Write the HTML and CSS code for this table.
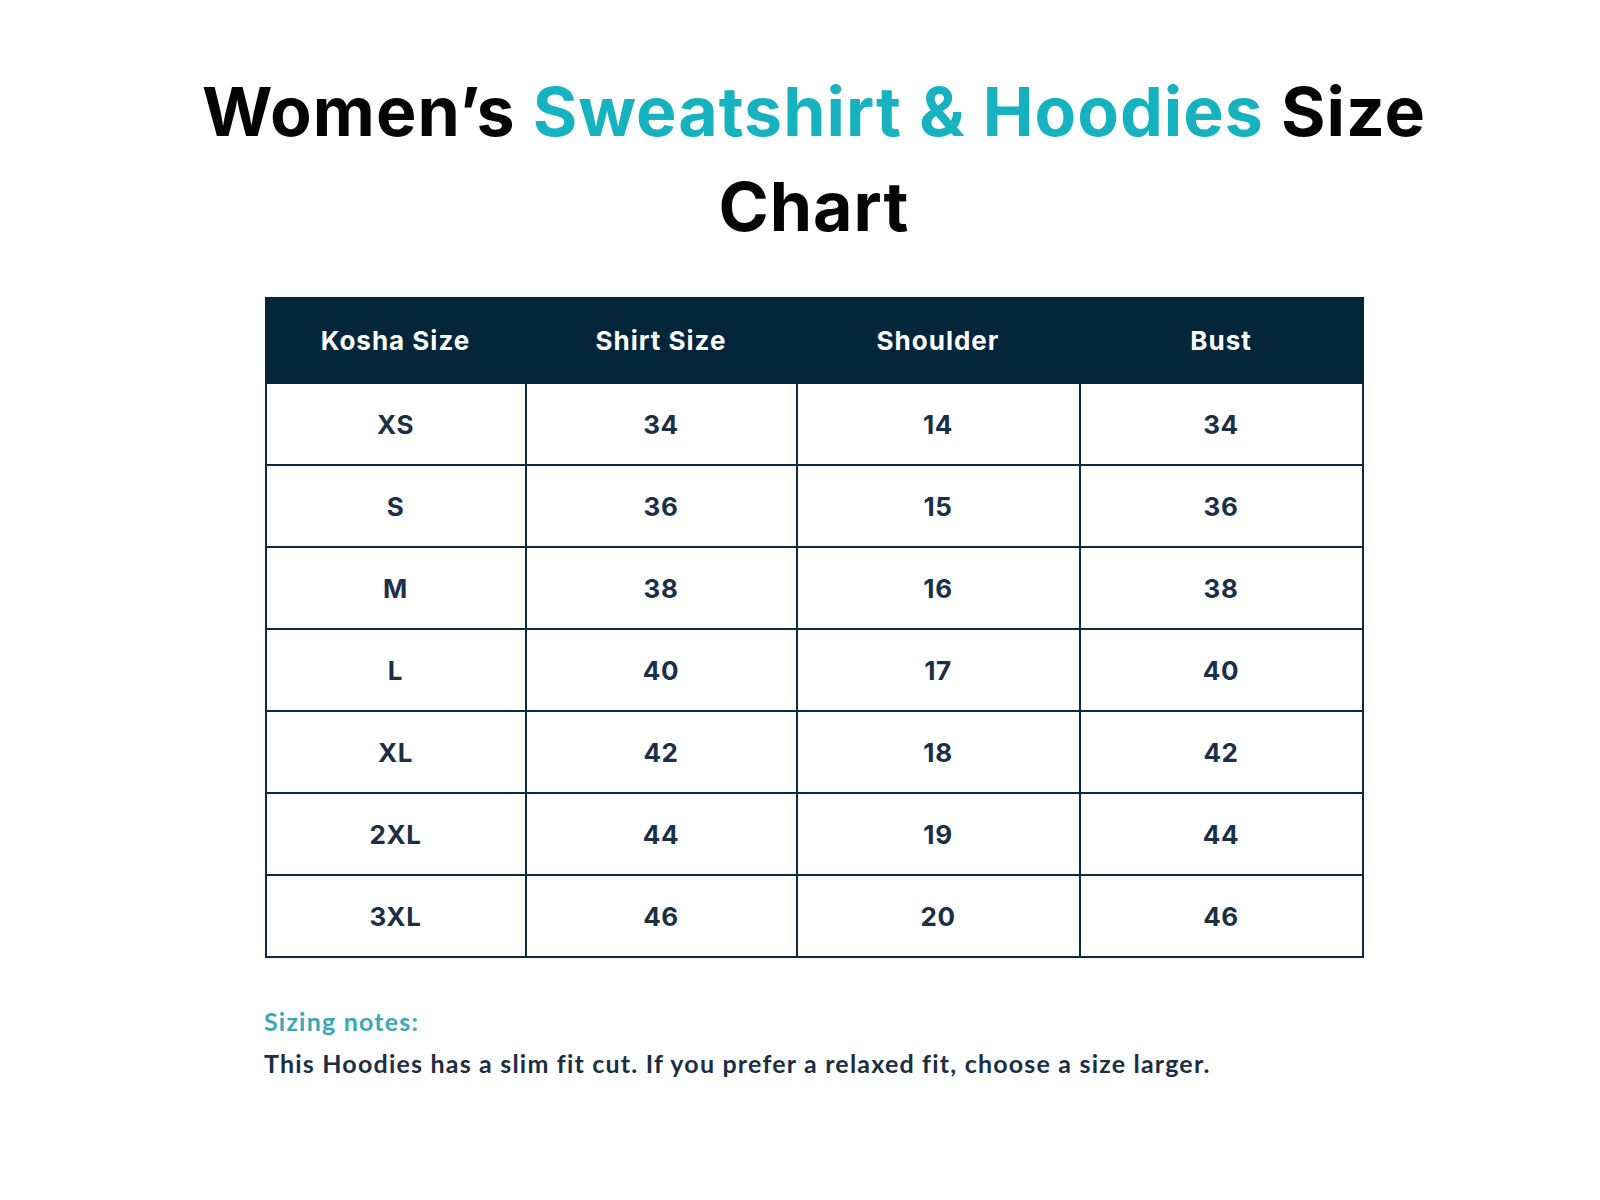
FILE: index.html
```html
<!DOCTYPE html>
<html lang="en">
<head>
<meta charset="utf-8">
<title>Women’s Sweatshirt &amp; Hoodies Size Chart</title>
<link rel="stylesheet" href="styles.css">
</head>
<body>
<main class="page">
  <h1 class="title">Women’s <span class="accent">Sweatshirt &amp; Hoodies</span> Size<br>Chart</h1>
  <table class="chart">
    <colgroup>
      <col class="c1"><col class="c2"><col class="c3"><col class="c4">
    </colgroup>
    <thead>
      <tr><th>Kosha Size</th><th>Shirt Size</th><th>Shoulder</th><th>Bust</th></tr>
    </thead>
    <tbody>
      <tr><td>XS</td><td>34</td><td>14</td><td>34</td></tr>
      <tr><td>S</td><td>36</td><td>15</td><td>36</td></tr>
      <tr><td>M</td><td>38</td><td>16</td><td>38</td></tr>
      <tr><td>L</td><td>40</td><td>17</td><td>40</td></tr>
      <tr><td>XL</td><td>42</td><td>18</td><td>42</td></tr>
      <tr><td>2XL</td><td>44</td><td>19</td><td>44</td></tr>
      <tr><td>3XL</td><td>46</td><td>20</td><td>46</td></tr>
    </tbody>
  </table>
  <section class="notes">
    <h2 class="notes-title">Sizing notes:</h2>
    <p class="notes-text">This Hoodies has a slim fit cut. If you prefer a relaxed fit, choose a size larger.</p>
  </section>
</main>
</body>
</html>
```

FILE: styles.css
```css
html, body {
  margin: 0;
  padding: 0;
  background: #ffffff;
}
body {
  font-family: "Inter", "Liberation Sans", sans-serif;
}
.page {
  display: flex;
  flex-direction: column;
  align-items: center;
  padding: 64px 0 0 28px;
}
.title {
  margin: 0;
  font-size: 68px;
  line-height: 95px;
  font-weight: 700;
  color: #050505;
  text-align: center;
  letter-spacing: 1px;
}
.accent {
  color: #17b2c0;
}
.chart {
  margin-top: 43px;
  width: 1097px;
  border-collapse: collapse;
  table-layout: fixed;
}
.c1 { width: 260px; }
.c2 { width: 271px; }
.c3 { width: 283px; }
.c4 { width: 283px; }
.chart th {
  background: #03263b;
  color: #ffffff;
  height: 83px;
  padding: 0;
  font-size: 26px;
  font-weight: 700;
  letter-spacing: 1px;
  text-align: center;
  border: 2px solid #03263b;
}
.chart td {
  height: 80px;
  padding: 0;
  text-align: center;
  font-size: 26px;
  font-weight: 700;
  color: #1b2f45;
  border: 2px solid #0d2a3e;
  letter-spacing: 0.6px;
}
.notes {
  align-self: stretch;
  width: 1100px;
  margin: 42px auto 0;
}
.notes-title {
  margin: 0;
  font-family: "Lato", "Liberation Sans", sans-serif;
  font-size: 25px;
  font-weight: 700;
  line-height: 42px;
  color: #3ba7b9;
  letter-spacing: 1.2px;
}
.notes-text {
  margin: 0;
  font-family: "Lato", "Liberation Sans", sans-serif;
  font-size: 25px;
  font-weight: 700;
  line-height: 42px;
  color: #1a2e44;
  letter-spacing: 1.2px;
}
```
